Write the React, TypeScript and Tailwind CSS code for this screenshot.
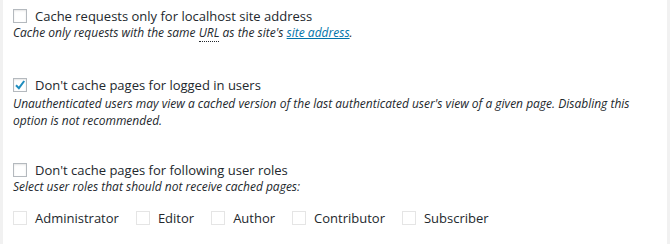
import type { ReactNode } from 'react';

const font = { fontFamily: '"Open Sans", "Noto Sans", sans-serif' };

function Box({ checked = false, faint = false }: { checked?: boolean; faint?: boolean }) {
  return (
    <span
      className={
        'relative inline-block w-[14px] h-[14px] shrink-0 bg-white border ' +
        (faint ? 'border-[#e5e5e5]' : 'border-[#b4b9be] shadow-[inset_0_1px_2px_rgba(0,0,0,0.1)]')
      }
    >
      {checked && (
        <svg viewBox="0 0 14 14" className="absolute -left-px -top-px w-[14px] h-[14px]">
          <path d="M3 7.2 5.9 10.2 11.2 3" fill="none" stroke="#1e8cbe" strokeWidth="2" />
        </svg>
      )}
    </span>
  );
}

function Option({
  checked,
  label,
  gap = 0,
  children,
}: {
  checked?: boolean;
  label: string;
  gap?: number;
  children: ReactNode;
}) {
  return (
    <div>
      <label className="flex items-center gap-[8px] text-[13px] leading-[16px] text-[#23282d]">
        <Box checked={checked} />
        {label}
      </label>
      <p
        className={
          'text-[12px] leading-[17px] italic text-[#23282d] ' + (gap ? 'mt-[2px]' : 'mt-0')
        }
      >
        {children}
      </p>
    </div>
  );
}

const roles = ['Administrator', 'Editor', 'Author', 'Contributor', 'Subscriber'];

export default function App() {
  return (
    <div className="w-[670px] h-[244px] bg-[#f1f1f1] flex" style={font}>
      <div className="ml-[3px] w-[664px] bg-white pl-[10px] pr-[12px] pt-[8px] flex flex-col">
        <Option label="Cache requests only for localhost site address">
          Cache only requests with the same{' '}
          <abbr className="no-underline border-b border-dotted border-[#23282d]">URL</abbr> as the site's{' '}
          <a className="text-[#0073aa] underline">site address</a>.
        </Option>

        <div className="mt-[36px]">
          <Option checked gap={2} label="Don't cache pages for logged in users">
            Unauthenticated users may view a cached version of the last authenticated user's view of a given page.
            Disabling this option is not recommended.
          </Option>
        </div>

        <div className="mt-[33px]">
          <Option label="Don't cache pages for following user roles">
            Select user roles that should not receive cached pages:
          </Option>
        </div>

        <div className="mt-[15px] flex items-center gap-[17px] text-[13px] leading-[16px] text-[#23282d]">
          {roles.map((r) => (
            <label key={r} className="flex items-center gap-[8px]">
              <Box faint />
              {r}
            </label>
          ))}
        </div>
      </div>
    </div>
  );
}
